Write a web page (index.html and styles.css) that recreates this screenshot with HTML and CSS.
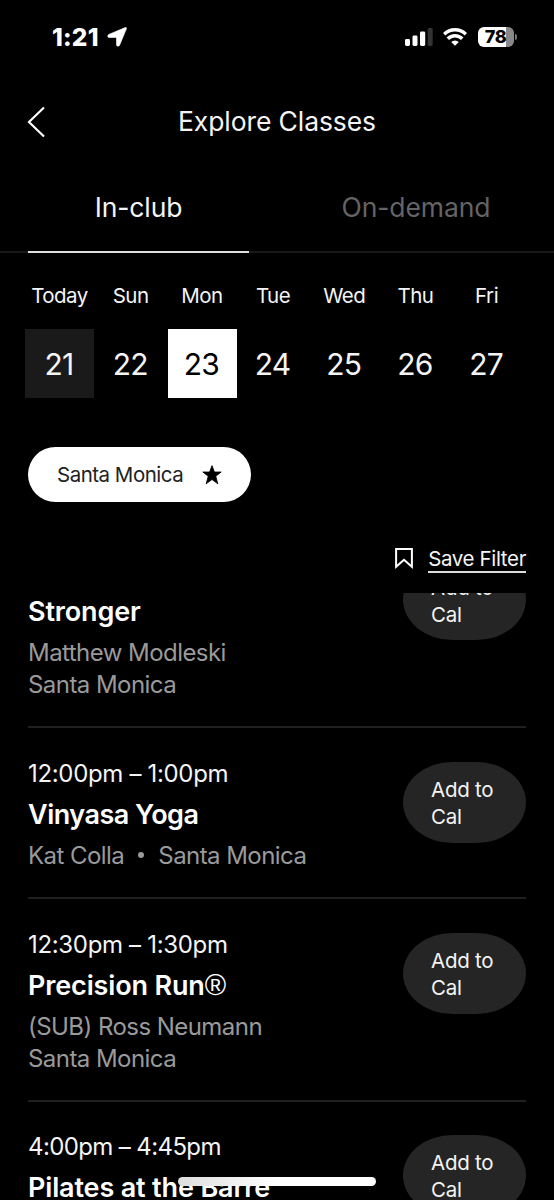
FILE: index.html
```html
<!DOCTYPE html>
<html lang="en">
<head>
<meta charset="utf-8">
<title>Explore Classes</title>
<link rel="stylesheet" href="styles.css">
</head>
<body>
<div class="app">
  <div class="status">
    <span class="clock">1:21</span>
    <svg class="locate" width="20" height="20" viewBox="0 0 20 20"><path d="M18.2.6C19.2.2 19.8.8 19.4 1.8L12.6 18.2C12 19.7 9.5 19.5 9.5 17.8V11.4Q9.5 10.5 8.6 10.5H2.2C.5 10.5.3 8 1.8 7.4Z" fill="#fff" stroke="#fff" stroke-width=".6"/></svg>
    <svg class="signal" width="28" height="18" viewBox="0 0 28 18"><g fill="#fff"><rect x="0" y="11" width="5" height="7" rx="1.4"/><rect x="7.5" y="7.5" width="5" height="10.5" rx="1.4"/><rect x="15" y="3.5" width="5.2" height="14.5" rx="1.4"/></g><rect x="22.7" y="0" width="5" height="18" rx="1.4" fill="#333"/></svg>
    <svg class="wifi" width="24" height="18" viewBox="0 0 24 18"><g fill="none" stroke="#fff" stroke-width="3.4"><path d="M1.1 6.2A15.5 15.5 0 0 1 22.9 6.2"/><path d="M4.8 10.8A10 10 0 0 1 19.2 10.8"/></g><path d="M12 17.8L8.2 14.1A5.4 5.4 0 0 1 15.8 14.1Z" fill="#fff"/></svg>
    <div class="battery"><span>78</span></div>
  </div>

  <header class="header">
    <svg class="back" width="20" height="32" viewBox="0 0 20 32"><path d="M17 1.5L2 16L17 30.5" fill="none" stroke="#fff" stroke-width="2.2"/></svg>
    <h1 class="title">Explore Classes</h1>
  </header>

  <nav class="tabs">
    <span class="tab tab-active">In-club</span>
    <span class="tab">On-demand</span>
  </nav>

  <div class="days">
    <div class="day today"><span class="label">Today</span><span class="num">21</span></div>
    <div class="day"><span class="label">Sun</span><span class="num">22</span></div>
    <div class="day selected"><span class="label">Mon</span><span class="num">23</span></div>
    <div class="day"><span class="label">Tue</span><span class="num">24</span></div>
    <div class="day"><span class="label">Wed</span><span class="num">25</span></div>
    <div class="day"><span class="label">Thu</span><span class="num">26</span></div>
    <div class="day"><span class="label">Fri</span><span class="num">27</span></div>
  </div>

  <div class="chip">
    <span>Santa Monica</span>
    <svg width="20" height="20" viewBox="0 0 20 20"><path d="M10 .6L12.4 7H19.2L13.8 11.3L15.8 18.8L10 14.5L4.2 18.8L6.2 11.3L.8 7H7.6Z" fill="#000" stroke="#000" stroke-width=".8" stroke-linejoin="round"/></svg>
  </div>

  <div class="save">
    <svg width="18" height="22" viewBox="0 0 18 22"><path d="M1.1 1.1H16.9V18.8L9 11.8L1.1 18.8Z" fill="none" stroke="#fff" stroke-width="2"/></svg>
    <span class="save-link">Save Filter</span>
  </div>

  <main class="list">
    <article class="item item-first">
      <div class="info">
        <h2 class="name name-short">Stronger</h2>
        <p class="meta">Matthew Modleski</p>
        <p class="meta">Santa Monica</p>
      </div>
      <div class="add">Add to<br>Cal</div>
    </article>
    <article class="item">
      <div class="info">
        <p class="time">12:00pm – 1:00pm</p>
        <h2 class="name">Vinyasa Yoga</h2>
        <p class="meta pair"><span>Kat Colla</span><i class="dot"></i><span>Santa Monica</span></p>
      </div>
      <div class="add">Add to<br>Cal</div>
    </article>
    <article class="item">
      <div class="info">
        <p class="time">12:30pm – 1:30pm</p>
        <h2 class="name name-short">Precision Run<span class="reg">®</span></h2>
        <p class="meta">(SUB) Ross Neumann</p>
        <p class="meta">Santa Monica</p>
      </div>
      <div class="add">Add to<br>Cal</div>
    </article>
    <article class="item item-last">
      <div class="info">
        <p class="time time-last">4:00pm – 4:45pm</p>
        <h2 class="name name-short">Pilates at the Barre</h2>
      </div>
      <div class="add">Add to<br>Cal</div>
    </article>
  </main>
  <div class="home"></div>
</div>
</body>
</html>
```
FILE: styles.css
```css
* { box-sizing: border-box; margin: 0; padding: 0; }
body { background: #000; color: #f4f4f4; font-family: Inter, "Liberation Sans", sans-serif; }
.app { position: relative; width: 554px; height: 1200px; overflow: hidden; display: flex; flex-direction: column; background: #000; }
svg { display: block; flex: none; }

.status { height: 74px; flex: none; display: flex; align-items: center; padding: 0 40px 0 52px; color: #fff; }
.clock { font-size: 24.5px; font-weight: 800; letter-spacing: 0.2px; width: 55px; }
.signal { margin-left: auto; }
.wifi { margin-left: 10px; }
.battery { position: relative; width: 36px; height: 20px; margin-left: 11px; border-radius: 6px; background: linear-gradient(90deg, #fff 78%, #888 78%); color: #000; font-size: 18px; font-weight: 800; line-height: 20px; text-align: center; letter-spacing: -0.3px; }
.battery span { display: block; padding-right: 1px; }
.battery::after { content: ""; position: absolute; left: 37px; top: 7px; width: 2px; height: 6px; border-radius: 0 2px 2px 0; background: #777; }

.header { height: 96px; flex: none; display: grid; grid-template-columns: 48px 1fr 48px; align-items: center; padding: 0 27px; }
.title { font-size: 26.5px; font-weight: 400; text-align: center; line-height: 32px; letter-spacing: -0.1px; margin-top: -3px; }

.tabs { height: 83px; flex: none; display: grid; grid-template-columns: 221px 222px; justify-content: space-between; padding: 0 27px 0 28px; box-shadow: inset 0 -2px #181818; font-size: 26.5px; letter-spacing: -0.1px; color: #646464; }
.tab { display: flex; justify-content: center; line-height: 75px; }
.tab-active { color: #f4f4f4; border-bottom: 2px solid #dedede; }

.days { flex: none; height: 194px; display: grid; grid-template-columns: repeat(7, 71.2px); padding: 30px 0 0 24.4px; }
.day { display: flex; flex-direction: column; align-items: center; }
.label { font-size: 20.5px; line-height: 26px; letter-spacing: -0.5px; padding-right: 1px; }
.num { margin-top: 20px; width: 69px; height: 69px; line-height: 71px; font-size: 30px; letter-spacing: -0.8px; padding-right: 2px; text-align: center; }
.today .num { background: #1a1a1a; }
.selected .num { background: #fff; color: #000; }

.chip { flex: none; align-self: flex-start; width: 223px; height: 55px; margin-left: 28px; border-radius: 28px; background: #fff; color: #222; display: flex; align-items: center; justify-content: space-between; padding: 0 29px; font-size: 20.5px; letter-spacing: -0.5px; }

.save { flex: none; height: 91px; display: flex; justify-content: flex-end; align-items: flex-start; padding: 45px 28px 0 0; }
.save svg { margin: 1px 15px 0 0; }
.save-link { font-size: 20.5px; line-height: 24px; height: 26px; letter-spacing: -0.35px; border-bottom: 2px solid #ddd; }

.list { flex: 1; min-height: 0; overflow: hidden; padding: 0 28px; }
.item { display: flex; justify-content: space-between; align-items: flex-start; padding: 31px 0 25px; border-bottom: 2px solid #202020; }
.item-first { margin-top: -68px; }
.item-first .info { padding-top: 30px; }
.item-last { padding-top: 30px; }
.time { font-size: 24px; line-height: 30px; letter-spacing: -0.33px; white-space: nowrap; }
.time-last { letter-spacing: -0.62px; }
.name { font-size: 27px; line-height: 32px; font-weight: 600; margin: 10px 0 9px; letter-spacing: -0.5px; white-space: nowrap; color: #fff; }
.name-short { letter-spacing: -0.15px; }
.reg { font-family: "Liberation Sans", Arial, sans-serif; font-size: 29px; font-weight: 400; line-height: 1; }
.meta { font-size: 24px; line-height: 32px; letter-spacing: -0.55px; color: #9a9a9a; white-space: nowrap; }
.pair { display: flex; align-items: center; }
.dot { width: 6px; height: 6px; border-radius: 50%; background: #9a9a9a; margin: -3px 14px 0; }
.add { flex: none; width: 123px; height: 81px; margin-top: 3px; padding: 14px 0 0 28px; border-radius: 50px / 41px; background: #252525; font-size: 20.5px; line-height: 27px; letter-spacing: -0.25px; }
.item-first .add { padding-top: 15px; }

.home { position: absolute; left: 178px; top: 1177px; width: 198px; height: 9px; border-radius: 5px; background: linear-gradient(90deg, #ddd, #fff 50%); }
```
